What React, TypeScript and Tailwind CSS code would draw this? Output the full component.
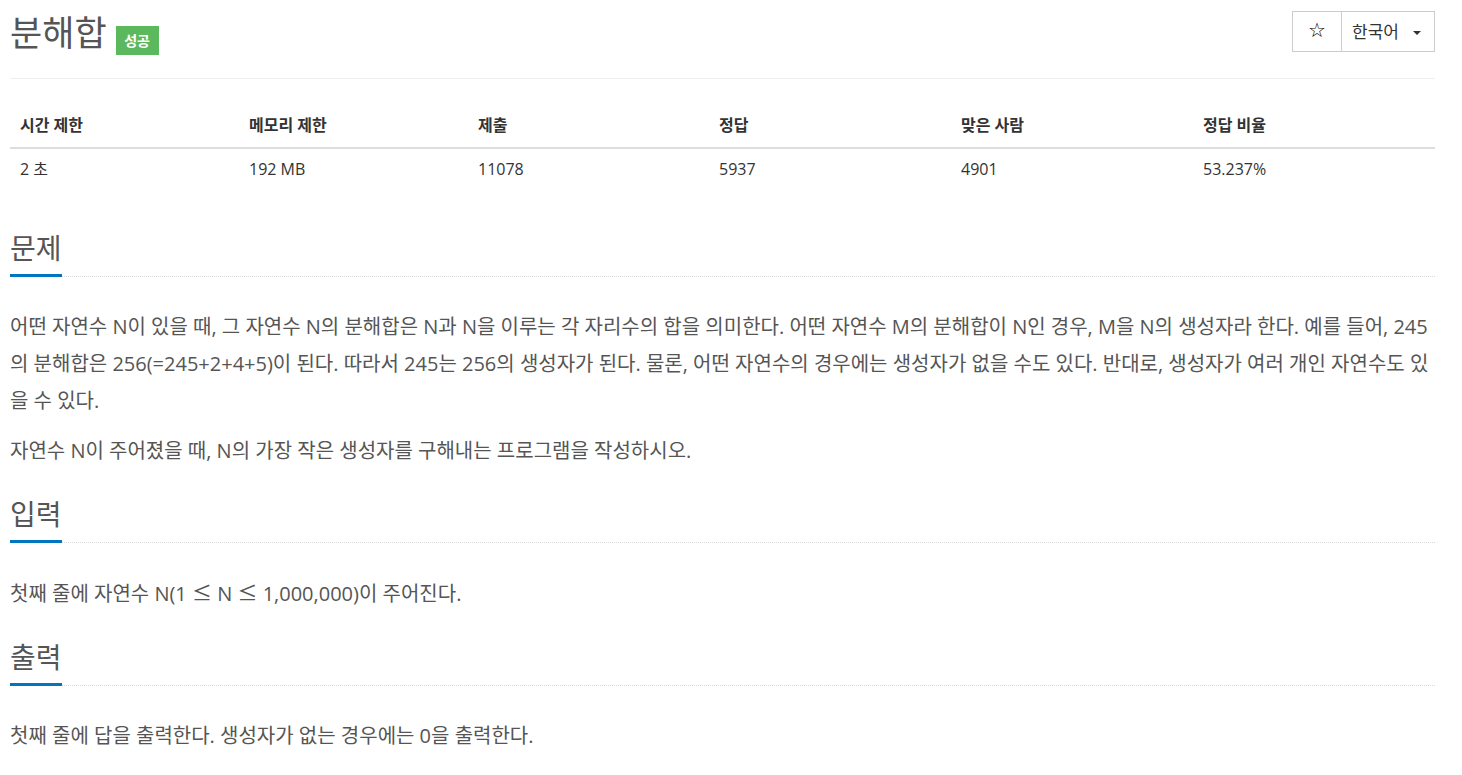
import React from "react";

function SectionTitle({ title }: { title: string }) {
  return (
    <div className="flex border-b border-dotted border-[#d9d9d9]">
      <h2 className="relative -mb-px border-b-[3px] border-[#0076c0] pb-[8px] text-[28px] font-normal leading-[36px] text-[#555]">
        {title}
      </h2>
    </div>
  );
}

const cols = [
  { h: "시간 제한", v: "2 초" },
  { h: "메모리 제한", v: "192 MB" },
  { h: "제출", v: "11078" },
  { h: "정답", v: "5937" },
  { h: "맞은 사람", v: "4901" },
  { h: "정답 비율", v: "53.237%" },
];

function Le() {
  return <span className="font-['Noto_Sans_CJK_KR',sans-serif]">≤</span>;
}

export default function App() {
  return (
    <div className="min-h-[775px] bg-white">
      <div className="ml-[10px] w-[1425px] font-['Open_Sans','Noto_Sans_CJK_KR',sans-serif] text-[#555]">
        {/* header */}
        <div className="flex h-[79px] items-start justify-between border-b border-[#eee]">
          <div className="flex items-start">
            <h1 className="mt-[13px] text-[35px] font-normal leading-[40px] text-[#555]">분해합</h1>
            <span className="ml-[9px] mt-[26px] flex h-[29px] w-[43px] items-center justify-center bg-[#5cb85c] text-[14px] font-bold text-white">
              성공
            </span>
          </div>
          <div className="mt-[11px] flex h-[41px] w-[143px] border border-[#ccc] text-[#333]">
            <div className="flex w-[49px] items-center justify-center border-r border-[#ccc] pb-[3px] font-['DejaVu_Sans',sans-serif] text-[20px] leading-none text-black">
              ☆
            </div>
            <div className="flex flex-1 items-center pl-[10px] text-[17px]">
              <span>한국어</span>
              <span className="ml-[14px] mt-[2px] h-0 w-0 border-x-[4px] border-t-[4px] border-x-transparent border-t-[#333]" />
            </div>
          </div>
        </div>

        {/* table */}
        <div className="mt-[24px] text-[16px] text-[#333]">
          <div className="grid h-[46px] grid-cols-[229px_229px_241px_242px_242px_1fr] items-center border-b-2 border-[#ddd] font-bold">
            {cols.map((c) => (
              <div key={c.h} className="pl-[10px]">
                {c.h}
              </div>
            ))}
          </div>
          <div className="grid h-[40px] grid-cols-[229px_229px_241px_242px_242px_1fr] items-center">
            {cols.map((c) => (
              <div key={c.h} className="pl-[10px]">
                {c.v}
              </div>
            ))}
          </div>
        </div>

        {/* 문제 */}
        <section className="mt-[41px]">
          <SectionTitle title="문제" />
          <div className="mt-[31px] text-[20px] leading-[37px]">
            <p>
              어떤 자연수 N이 있을 때, 그 자연수 N의 분해합은 N과 N을 이루는 각 자리수의 합을 의미한다. 어떤 자연수 M의 분해합이 N인 경우, M을 N의 생성자라 한다. 예를 들어, 245의 분해합은 256(=245+2+4+5)이 된다. 따라서 245는 256의 생성자가 된다. 물론, 어떤 자연수의 경우에는 생성자가 없을 수도 있다. 반대로, 생성자가 여러 개인 자연수도 있을 수 있다.
            </p>
            <p className="mt-[13px]">자연수 N이 주어졌을 때, N의 가장 작은 생성자를 구해내는 프로그램을 작성하시오.</p>
          </div>
        </section>

        {/* 입력 */}
        <section className="mt-[27px]">
          <SectionTitle title="입력" />
          <div className="mt-[31px] text-[20px] leading-[37px]">
            <p>
              첫째 줄에 자연수 N(1 <Le /> N <Le /> 1,000,000)이 주어진다.
            </p>
          </div>
        </section>

        {/* 출력 */}
        <section className="mt-[27px]">
          <SectionTitle title="출력" />
          <div className="mt-[31px] text-[20px] leading-[37px]">
            <p>첫째 줄에 답을 출력한다. 생성자가 없는 경우에는 0을 출력한다.</p>
          </div>
        </section>
      </div>
    </div>
  );
}
